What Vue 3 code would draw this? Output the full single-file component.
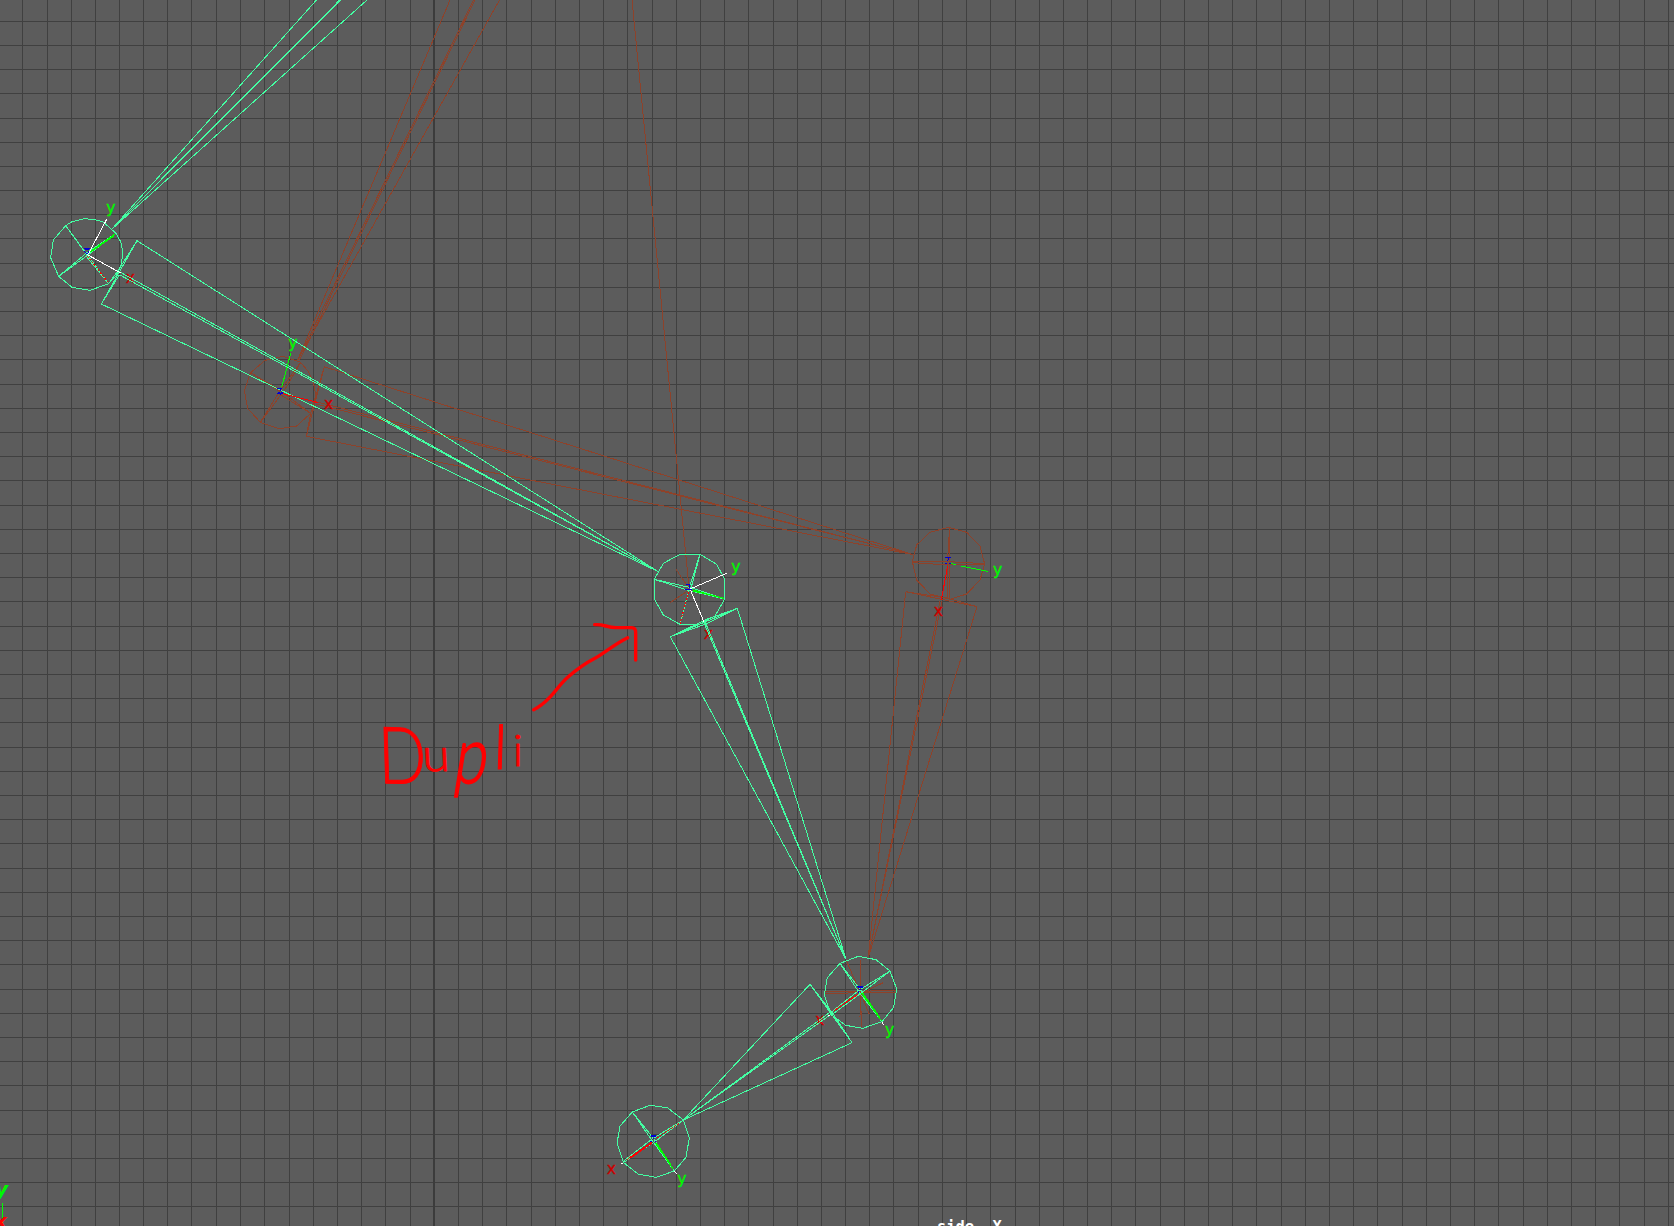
<script setup>
const gridX = [
  22, 47, 71, 95, 119, 143, 167, 191, 216, 240, 264, 289, 313, 337, 361, 385, 410,
  458, 482, 506, 531, 555, 579, 603, 627, 652, 676, 700, 724, 748, 773, 797, 821, 845,
  869, 893, 918, 942, 966, 990, 1015, 1039, 1063, 1087, 1111, 1135, 1160, 1184, 1208,
  1232, 1256, 1281, 1305, 1329, 1353, 1377, 1402, 1426, 1450, 1474, 1498, 1523, 1547,
  1571, 1595, 1619, 1644, 1668,
]
const gridY = [
  21, 45, 69, 93, 118, 142, 166, 190, 214, 238, 263, 287, 311, 335, 359, 384, 408, 432,
  456, 480, 505, 529, 553, 577, 601, 626, 650, 674, 698, 722, 747, 771, 795, 819, 843,
  868, 892, 916, 940, 964, 989, 1013, 1037, 1061, 1085, 1110, 1134, 1158, 1182, 1206,
]

// Each joint is drawn in its own local space, three units to a pixel.
const k = 1 / 3
const place = (x, y) => `translate(${x} ${y}) scale(${k})`

const groups = [
  {
    id: 'hip', at: place(0, 180),
    paths: [
      ['ghost', 'M850 529 902 547 925 575 940 605 948 650 932 700 890 738 838 746 781 727 743 685 733 632 752 578 795 541Z M781 727 840 632M781 727 846 640M902 547 838 635M902 547 848 640M752 578 840 635M752 578 836 628M932 700 840 631M932 700 838 642M973 560 919 769M973 560 932 700 919 769'],
      ['bone', 'M197 137 216 125 252 116 285 119 310 126 348 160 362 185 368 215 365 250 350 285 326 311 270 331 216 322 176 289 152 233 160 180Z M197 137 262 225M197 137 256 218M176 289 262 217M176 289 268 222M348 160 262 217M348 160 268 222M326 311 262 225M326 311 258 228M411 182 304 372M411 182 352 275 326 311M304 372 358 285'],
      ['green', 'M268 217 345 162M272 216 342 168M845 622 872 520'],
      ['red dots', 'M262 228 325 308'],
      ['red', 'M845 640 955 668M890 651 950 667'],
      ['white', 'M265 222 320 118M262 224 362 279'],
      ['blue', 'M251 206H271M254 209H268M254 214 260 221M267 214 262 221M832 625H847M840 628V634M831 643 837 636 842 643 846 636 850 643M831 640H850'],
    ],
    labels: [['y', 333, 92], ['x', 391, 296], ['y', 879, 495], ['x', 986, 673]],
  },
  {
    id: 'knee', at: place(620, 520),
    paths: [
      ['ghost', 'M985 22 1040 37 1080 78 1094 132 1080 180 1040 222 990 238 930 222 890 180 877 125 890 75 930 37Z M989 22 982 130 984 238M989 22 989 238M877 125 985 125 1094 131M877 128 985 135 1094 132M857 215 964 238 1071 260M857 215 980 234 1071 260M168 148 207 205M150 248 207 210'],
      ['bone', 'M180 103 240 103 290 133 314 178 314 237 285 288 238 313 180 313 130 285 103 237 103 178 130 130Z M240 103 207 205M240 103 213 205M103 178 205 211 314 237M103 178 212 203 314 237M180 313 207 210M352 265 151 350M352 265 260 298 151 350M352 265 258 312 151 350'],
      ['green', 'M215 209 312 236M220 213 308 234M990 130 1008 134M1022 138 1103 154'],
      ['red dots', 'M206 215 180 311'],
      ['red', 'M983 137 964 240'],
      ['white', 'M210 207 320 160M210 207 252 306'],
      ['blue', 'M198 192H209M207 192V204M196 209H215M975 113H993M987 116 982 122M976 130H982M987 130H993'],
    ],
    labels: [['y', 348, 148], ['x', 265, 344], ['y', 1133, 157], ['x', 955, 274]],
  },
  {
    id: 'ankle', at: place(780, 920),
    paths: [
      ['ghost', 'M133 215 348 212M133 221 240 218 348 217M240 120 244 320M243 120 240 290M198 120 240 215 268 283M310 188 200 240'],
      ['bone', 'M235 109 288 119 330 153 350 207 341 262 306 305 248 325 197 316 153 283 133 225 142 173 180 130Z M180 130 244 213 306 305M180 130 235 214 306 305M330 153 238 210 153 277M330 153 244 219 153 286M90 193 216 368M90 193 160 283 216 368'],
      ['green', 'M245 220 304 302M248 219 298 290'],
      ['red', 'M235 222 162 272M112 298 126 311'],
      ['white', 'M144 285H149M306 305 310 314'],
      ['blue', 'M232 199H250M234 203H248M238 207H243M235 212V220'],
    ],
    labels: [['y', 329, 337], ['x', 120, 303]],
  },
  {
    id: 'toe', at: place(590, 1060),
    paths: [
      ['bone', 'M180 136 232 143 280 180 298 233 288 292 253 333 198 352 144 342 100 307 81 250 90 198 127 156Z M127 156 194 240 253 333M127 156 185 240 253 333M280 180 185 238 100 304M280 180 196 244 100 308'],
      ['green', 'M195 248 250 328M198 248 244 316'],
      ['red', 'M186 246 112 298M186 249 124 293'],
      ['red dots', 'M200 235 270 188'],
      ['white', 'M100 308 92 313M253 333 260 341'],
      ['blue', 'M182 227H199M184 230H197M188 234H193M180 245H185M194 245H199'],
    ],
    labels: [['x', 64, 328], ['y', 276, 363]],
  },
]

const ghostBones =
  'M450 0 297.7 360M473.5 0 297.7 360M475 0 299.5 360M499.5 0 297.7 360' +
  'M632 0 689 588' +
  'M324.3 366.7 913.3 554.7M306.3 436.3 913.3 554.7M316 401.7 913.3 554.7M316 404 913.3 554.7' +
  'M905.7 591.7 868.3 957.3M977 606.7 868.3 957.3M940 601 868.3 957.3M942 601 868.3 957.3'
const bones =
  'M316.5 0 112 229M339.7 0 112 229M341 0 112 229M367 0 112 229' +
  'M137 240.7 658.3 571.7M101.3 304 658.3 571.7M120 272 658.3 571.7M120 275 658.3 571.7' +
  'M737.3 608.3 846 959.3M670.3 636.7 846 959.3M703.5 621.7 846 959.3M705 621.7 846 959.3' +
  'M810 984.3 683.3 1120M852 1042.7 683.3 1120M830 1012.3 683.3 1120M831 1014.3 683.3 1120'

// Handwritten note: every letter has its own size and slant.
const note = [
  ['D', 'matrix(.8 .02 .03 1 379 783)', 79],
  ['u', 'matrix(1.08 0 .05 1 423 771)', 46],
  ['p', 'matrix(1.32 0 -.28 1.75 452 783)', 45],
  ['l', 'matrix(1 0 -.03 1 493 769)', 61],
  ['i', 'matrix(1 0 0 1 513 766)', 44],
]
</script>

<template>
  <main class="viewport">
    <svg class="scene" width="1674" height="1226" viewBox="0 0 1674 1226">
      <g class="grid">
        <rect v-for="x in gridX" :key="'x' + x" :x="x" y="0" width="1" height="1226" />
        <rect v-for="y in gridY" :key="'y' + y" x="0" :y="y" width="1674" height="1" />
        <rect class="axis" x="433" y="0" width="2" height="1226" />
      </g>

      <path class="ghost" :d="ghostBones" />
      <g v-for="g in groups" :key="g.id" :transform="g.at">
        <template v-for="(p, i) in g.paths" :key="i">
          <path v-if="p[0] === 'ghost'" :class="p[0]" :d="p[1]" />
        </template>
        <text
          v-for="(l, i) in g.labels" :key="'l' + i" class="label" :class="l[0]"
          :x="l[1]" :y="l[2] + (l[0] === 'y' ? 8 : 13)"
        >{{ l[0] }}</text>
      </g>
      <path class="bone" :d="bones" />
      <g v-for="g in groups" :key="g.id" :transform="g.at">
        <template v-for="(p, i) in g.paths" :key="i">
          <path v-if="p[0] !== 'ghost'" :class="p[0]" :d="p[1]" />
        </template>
      </g>

      <g class="ink">
        <text v-for="n in note" :key="n[0]" :transform="n[1]" :font-size="n[2]">{{ n[0] }}</text>
        <path
          :transform="place(370, 600)"
          d="M491 329C510 320 526 306 542 289C562 267 575 247 594 231C620 208 640 193 676 174C708 156 732 133 773 113M674 74C700 72 710 82 738 83H785Q797 83 797 98V180"
        />
      </g>

      <text class="corner y" x="-5" y="1196">y</text>
      <path class="corner-axis" d="M2.5 1203V1226" />
      <text class="corner x" x="-6" y="1228">x</text>
      <text class="camera" x="937" y="1232" xml:space="preserve">side -X</text>
    </svg>
  </main>
</template>

<style>
html,
body {
  margin: 0;
  overflow: hidden;
  background: #5c5c5c;
}
</style>

<style scoped>
.viewport {
  width: 1674px;
  height: 1226px;
  overflow: hidden;
  background: #5c5c5c;
}
.scene {
  display: block;
}
.grid {
  fill: #404040;
  shape-rendering: crispEdges;
}
.grid .axis {
  fill: #3c3c3c;
}
path {
  fill: none;
  stroke-width: 1;
  vector-effect: non-scaling-stroke;
  shape-rendering: crispEdges;
}
.ghost {
  stroke: #8e422a;
}
.bone {
  stroke: #43ffa3;
}
.green,
.corner-axis {
  stroke: #00ff00;
}
.red {
  stroke: #ff0000;
}
.dots {
  stroke-dasharray: 2 1.5;
}
.white {
  stroke: #ffffff;
}
.blue {
  stroke: #0000d8;
}
.label {
  font: 47px "DejaVu Sans", sans-serif;
  text-anchor: middle;
  stroke-width: 1;
}
.y {
  fill: #00f800;
  stroke: #00f800;
}
.x {
  fill: #cc0000;
  stroke: #cc0000;
}
.ink path {
  stroke: #ff0000;
  stroke-width: 3.4;
  stroke-linecap: round;
  stroke-linejoin: round;
  shape-rendering: auto;
}
.ink text {
  font-family: Lato, "Open Sans", sans-serif;
  font-weight: 300;
  fill: #ff0000;
  stroke: #ff0000;
  stroke-width: 1;
  stroke-linejoin: round;
}
.corner {
  font: italic bold 20px "DejaVu Sans", sans-serif;
  stroke: none;
}
.corner.x {
  fill: #ff0000;
}
.camera {
  font: bold 15.4px "DejaVu Sans Mono", monospace;
  fill: #ffffff;
}
</style>
